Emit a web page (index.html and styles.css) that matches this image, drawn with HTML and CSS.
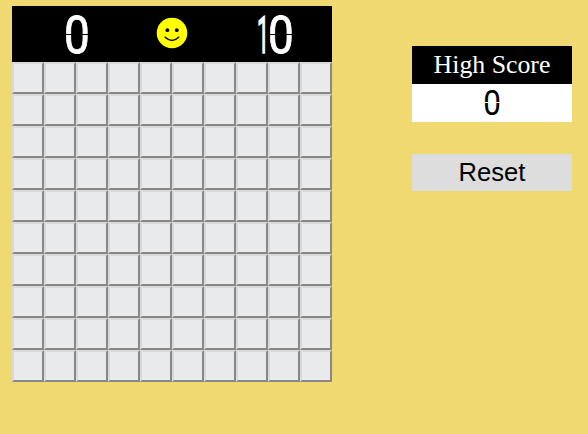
FILE: index.html
```html
<!DOCTYPE html>
<html lang="en">
<head>
<meta charset="utf-8">
<title>Minesweeper</title>
<link rel="stylesheet" href="styles.css">
</head>
<body>
<main class="game">
  <section class="field">
    <header class="status">
      <div class="counter"><span class="digit zero">0</span></div>
      <svg class="face" viewBox="0 0 32 32">
        <circle cx="16" cy="16" r="15.3" fill="#ff0"/>
        <circle cx="11.4" cy="13.2" r="1.9"/>
        <circle cx="20.8" cy="13.2" r="1.9"/>
        <path d="M9.2 20.3Q15.9 26.7 22.7 20.3" fill="none" stroke="#000" stroke-width="1.5" stroke-linecap="round"/>
      </svg>
      <div class="counter mines"><span class="digit one">1</span><span class="digit zero">0</span></div>
    </header>
    <div class="board" id="board"></div>
  </section>
  <aside class="side">
    <div class="label">High Score</div>
    <div class="score"><span class="digit zero">0</span></div>
    <button class="reset">Reset</button>
  </aside>
</main>
<script src="board.js"></script>
</body>
</html>
```
FILE: styles.css
```css
* { box-sizing: border-box; }
body {
  margin: 0;
  min-height: 434px;
  background: #f0d971;
  overflow: hidden;
}
.game {
  display: flex;
  gap: 80px;
  padding: 6px 0 0 12px;
}
.field { width: 320px; }
.status {
  display: grid;
  grid-template-columns: 129px 62px 129px;
  align-items: center;
  justify-items: center;
  height: 56px;
  background: #000;
  color: #fff;
}
.counter {
  display: flex;
  height: 56px;
}
.mines {
  justify-self: start;
  padding-left: 56px;
}
.face {
  width: 32px;
  height: 32px;
  margin-top: -2px;
}
.digit {
  display: flex;
  justify-content: center;
  position: relative;
  width: 26px;
  font: 400 51px/59px Roboto, "Liberation Sans", sans-serif;
  transform: scaleX(.9);
}
.counter .zero { -webkit-text-stroke: .8px; }
.one {
  width: 28px;
  margin: 0 -9px 0 -10px;
  transform: scaleX(.42);
  -webkit-text-stroke: 1.5px;
}
/* thin break between the upper and lower half of the display */
.zero::after {
  content: "";
  position: absolute;
  left: 0;
  right: 0;
  top: 28px;
  height: 1px;
  background: #000;
}
.board {
  display: grid;
  grid-template-columns: repeat(10, 32px);
  grid-auto-rows: 32px;
}
.cell {
  background: #e9eaeb;
  border: 2px solid;
  border-color: #dad9da #878787 #878787 #dad9da;
}
.side {
  width: 160px;
  padding-top: 40px;
}
.label {
  height: 38px;
  background: #000;
  color: #fff;
  font: 25.8px/38px "Liberation Serif", serif;
  text-align: center;
}
.score {
  display: flex;
  justify-content: center;
  height: 38px;
  background: #fff;
  color: #000;
}
.score .digit {
  width: 18px;
  font-size: 35px;
  line-height: 39px;
}
.score .zero::after { top: 18px; background: #fff; }
.reset {
  display: block;
  width: 160px;
  height: 37px;
  margin-top: 32px;
  padding: 0;
  border: 0;
  background: #ddd;
  color: #000;
  font: 25.6px/37px "Liberation Sans", sans-serif;
}
```
FILE: board.js
```js
const board = document.getElementById("board");
for (let i = 0; i < 100; i++) {
  const cell = document.createElement("div");
  cell.className = "cell";
  board.appendChild(cell);
}
```
